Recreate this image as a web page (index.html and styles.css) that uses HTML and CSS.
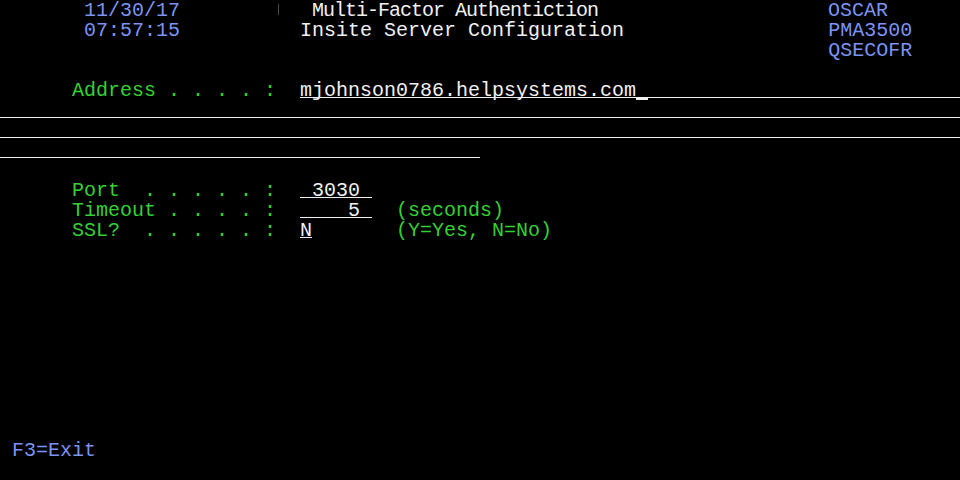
FILE: index.html
```html
<!DOCTYPE html>
<html lang="en">
<head>
    <meta charset="UTF-8">
    <meta name="viewport" content="width=device-width, initial-scale=1.0">
    <title>Multi-Factor Authentication</title>
    <link rel="stylesheet" href="styles.css">
</head>
<body>
    <div class="screen">
        <!-- Header -->
        <div class="row"><span class="blue">       11/30/17</span>        <span class="mark"></span>  <span class="white title">Multi-Factor Authentiction</span>                 <span class="blue">OSCAR</span></div>
        <div class="row"><span class="blue">       07:57:15</span>          <span class="white">Insite Server Configuration</span>                 <span class="blue">PMA3500</span></div>
        <div class="row">                                                                     <span class="blue">QSECOFR</span></div>
        <div class="row"></div>

        <!-- Address field spans four lines -->
        <div class="row"><span class="green">      Address . . . . :  </span><span class="field w55">mjohnson0786.helpsystems.com<span class="cursor"></span></span></div>
        <div class="row"><span class="field w80"></span></div>
        <div class="row"><span class="field w80"></span></div>
        <div class="row"><span class="field w40"></span></div>
        <div class="row"></div>

        <div class="row"><span class="green">      Port  . . . . . :  </span><span class="field w6"> 3030 </span></div>
        <div class="row"><span class="green">      Timeout . . . . :  </span><span class="field w6">    5 </span>  <span class="green">(seconds)</span></div>
        <div class="row"><span class="green">      SSL?  . . . . . :  </span><span class="field w1">N</span>       <span class="green">(Y=Yes, N=No)</span></div>

        <div class="row"></div>
        <div class="row"></div>
        <div class="row"></div>
        <div class="row"></div>
        <div class="row"></div>
        <div class="row"></div>
        <div class="row"></div>
        <div class="row"></div>
        <div class="row"></div>
        <div class="row"></div>

        <!-- Function keys -->
        <div class="row"><span class="blue"> F3=Exit</span></div>
        <div class="row"></div>
    </div>
</body>
</html>
```

FILE: styles.css
```css
body {
    margin: 0;
    background-color: #000;
}

.screen {
    width: 960px;
    height: 480px;
    background-color: #000;
    font-family: "Liberation Mono", "DejaVu Sans Mono", monospace;
    font-size: 20px;
    line-height: 22px;
    color: #f0f0f0;
    overflow: hidden;
}

.row {
    height: 20px;
    white-space: pre;
}

.blue {
    color: #7b93f2;
}

.green {
    color: #34d034;
}

.white {
    color: #f0f0f0;
}

/* title is drawn a little narrower than the grid */
.title {
    display: inline-block;
    vertical-align: top;
    width: 312px;
    letter-spacing: -1px;
}

.mark {
    display: inline-block;
    vertical-align: top;
    width: 10px;
    height: 11px;
    margin-top: 4px;
    margin-left: 2px;
    border-left: 1px solid #4a4a4a;
    box-sizing: border-box;
}

.field {
    display: inline-block;
    vertical-align: top;
    height: 17px;
    border-bottom: 1px solid #f0f0f0;
    color: #f0f0f0;
}

.w1 { width: 12px; }
.w6 { width: 72px; }
.w40 { width: 480px; }
.w55 { width: 660px; }
.w80 { width: 960px; }

.cursor {
    display: inline-block;
    vertical-align: top;
    width: 12px;
    height: 20px;
    border-bottom: 3px solid #f0f0f0;
    box-sizing: border-box;
}
```
